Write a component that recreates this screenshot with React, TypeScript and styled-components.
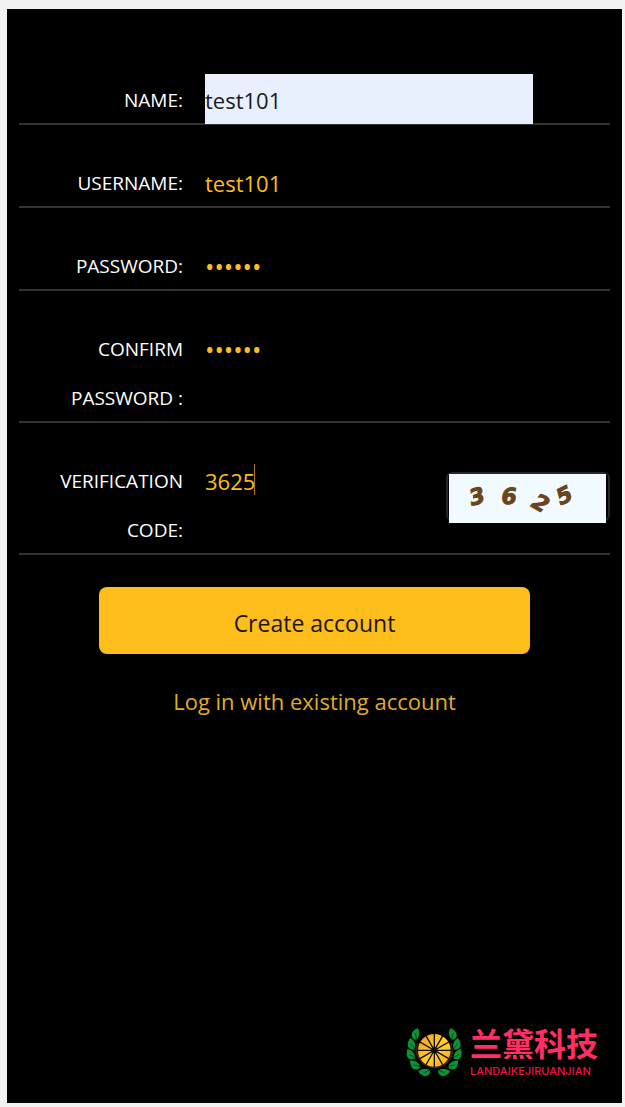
import React from 'react';
import styled, { createGlobalStyle } from 'styled-components';

const GlobalStyle = createGlobalStyle`
  *, *::before, *::after { box-sizing: border-box; }
  body {
    margin: 0;
    background: #f3f2f2;
    font-family: 'Open Sans', 'Noto Sans', sans-serif;
  }
`;

const Page = styled.div`
  display: flex;
  min-height: 100vh;
  padding: 9px 3px 4px 7px;
`;

const Screen = styled.main`
  flex: 1;
  display: flex;
  flex-direction: column;
  padding: 65px 12px 22px;
  background: #000;
`;

const Form = styled.form`
  display: flex;
  flex-direction: column;
  gap: 32px;
`;

const Row = styled.div`
  display: flex;
  align-items: flex-start;
  border-bottom: 2px solid #333;
`;

const Label = styled.label`
  flex: none;
  width: 164px;
  margin: 0 22px -2px 0;
  padding-top: 2px;
  color: #fff;
  font-size: 19px;
  line-height: 49px;
  text-align: right;
  text-transform: uppercase;
`;

const Field = styled.div`
  position: relative;
  flex: 1;
  display: flex;
  justify-content: space-between;
`;

const Input = styled.input<{ $filled?: boolean; $short?: boolean }>`
  width: ${p => (p.$short ? '55%' : '81%')};
  height: 50px;
  margin: 0 0 -1px;
  padding: 1px 0 0;
  border: 0;
  border-radius: 0;
  outline: 0;
  background: ${p => (p.$filled ? '#e8f0fe' : 'transparent')};
  color: ${p => (p.$filled ? '#1a1a24' : '#fdbd1a')};
  font-family: inherit;
  font-size: 22px;

  &[type='password'] { font-size: 25px; }
`;

const Caret = styled.span`
  position: absolute;
  left: 49px;
  top: 9px;
  width: 1px;
  height: 31px;
  background: #a87d16;
`;

const Captcha = styled.button`
  display: flex;
  justify-content: center;
  width: 164px;
  height: 49px;
  margin: 17px 0 0;
  padding: 0 2px 0 0;
  border: 2px solid #23272b;
  border-radius: 6px;
  background: transparent;

  svg { flex: none; background: #f0faff; }
`;

const Submit = styled.button`
  align-self: center;
  width: 73%;
  height: 67px;
  padding: 5px 0 0;
  border: 0;
  border-radius: 8px;
  background: #fdbd1a;
  color: #1c1608;
  font-family: inherit;
  font-size: 23px;
`;

const LoginLink = styled.a`
  align-self: center;
  color: #e0ac2c;
  font-size: 22px;
  line-height: 30px;
  text-decoration: none;
`;

const Brand = styled.footer`
  display: flex;
  align-items: center;
  align-self: flex-end;
  margin-top: auto;
  margin-right: 12px;
`;

const BrandText = styled.div`
  display: flex;
  flex-direction: column;
  gap: 4px;
`;

const BrandName = styled.span`
  color: #ff2f63;
  font-family: 'Noto Sans CJK SC', sans-serif;
  font-size: 32px;
  font-weight: 700;
  line-height: 36px;
`;

const BrandLatin = styled.span`
  color: #f0103f;
  font-family: Inter, sans-serif;
  font-size: 11px;
  font-weight: 500;
  line-height: 14px;
`;

const fields = [
  { id: 'name', label: 'Name:', type: 'text', value: 'test101', filled: true },
  { id: 'username', label: 'Username:', type: 'text', value: 'test101' },
  { id: 'password', label: 'Password:', type: 'password', value: '123456' },
  { id: 'confirm', label: 'Confirm Password :', type: 'password', value: '123456' },
];

const digits = [
  { d: '3', x: 28, y: 22, r: -16 },
  { d: '6', x: 60, y: 22, r: -2 },
  { d: '2', x: 92, y: 29, r: 30 },
  { d: '5', x: 115, y: 21, r: -26 },
];

const leaves = [
  [47, 39, 8],
  [34, 70, -20],
  [31, 101, -38],
  [44, 132, -58],
  [74, 154, -96],
];

const Leaf = () => (
  <>
    <path
      d="M4 -21C14 -10 16 8 5 19C-10 19 -16 7 -12 -4C-9 -11 -4 -16 4 -21Z"
      fill="#0b9138"
      stroke="#000"
      strokeWidth="3"
    />
    <path d="M5 19C4 12 2 4 -2 -2" fill="none" stroke="#002c0c" strokeWidth="2" />
  </>
);

const Wreath = () => (
  <svg width="70" height="60" viewBox="0 0 210 180" aria-hidden="true">
    <defs>
      <linearGradient id="slice" x1="0" y1="0" x2="1" y2="1">
        <stop offset="0" stopColor="#f59a12" />
        <stop offset="0.55" stopColor="#ffd02c" />
        <stop offset="1" stopColor="#f8a516" />
      </linearGradient>
    </defs>
    <path d="M53 66A54 54 0 1 0 154 66" fill="none" stroke="#40231a" strokeWidth="5" />
    <circle cx="103" cy="88" r="49" fill="url(#slice)" />
    {[0, 30, 60, 90, 120, 150].map(a => (
      <path key={a} d="M103 38V138" stroke="#120a00" strokeWidth="4" transform={`rotate(${a} 103 88)`} />
    ))}
    <circle cx="103" cy="88" r="9" fill="#120a00" />
    {leaves.map(([x, y, r]) => (
      <g key={y}>
        <g transform={`translate(${x} ${y}) rotate(${r})`}><Leaf /></g>
        <g transform={`translate(${205 - x} ${y}) scale(-1 1) rotate(${r})`}><Leaf /></g>
      </g>
    ))}
  </svg>
);

export default function App() {
  return (
    <Page>
      <GlobalStyle />
      <Screen>
        <Form onSubmit={e => e.preventDefault()}>
          {fields.map(f => (
            <Row key={f.id}>
              <Label htmlFor={f.id}>{f.label}</Label>
              <Field>
                <Input id={f.id} type={f.type} defaultValue={f.value} $filled={f.filled} />
              </Field>
            </Row>
          ))}
          <Row>
            <Label htmlFor="code">Verification code:</Label>
            <Field>
              <Input id="code" type="text" defaultValue="3625" $short />
              <Caret />
              <Captcha type="button" aria-label="Refresh verification code">
                <svg width="157" height="49" viewBox="0 0 157 49">
                  {digits.map(g => (
                    <text
                      key={g.d}
                      transform={`translate(${g.x} ${g.y}) rotate(${g.r})`}
                      y="8"
                      textAnchor="middle"
                      fill="#6b441c"
                      stroke="#6b441c"
                      strokeWidth="1"
                      fontFamily="'DejaVu Sans', sans-serif"
                      fontSize="22"
                      fontWeight="700"
                      fontStyle="italic"
                    >
                      {g.d}
                    </text>
                  ))}
                </svg>
              </Captcha>
            </Field>
          </Row>
          <Submit type="submit">Create account</Submit>
          <LoginLink href="#login">Log in with existing account</LoginLink>
        </Form>
        <Brand>
          <Wreath />
          <BrandText>
            <BrandName lang="zh-CN">兰黛科技</BrandName>
            <BrandLatin>LANDAIKEJIRUANJIAN</BrandLatin>
          </BrandText>
        </Brand>
      </Screen>
    </Page>
  );
}
